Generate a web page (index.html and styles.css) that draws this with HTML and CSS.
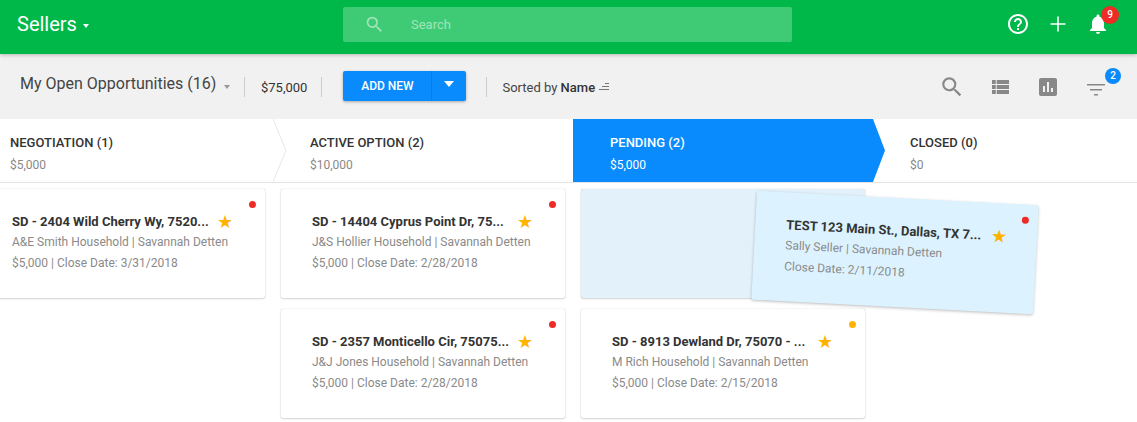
FILE: index.html
```html
<!DOCTYPE html>
<html lang="en">
<head>
    <meta charset="UTF-8">
    <title>Sellers</title>
    <link rel="stylesheet" href="styles.css">
</head>
<body>
    <header class="topbar">
        <div class="brand">Sellers <span class="caret caret-white"></span></div>
        <div class="search">
            <svg class="search-icon" viewBox="0 0 24 24" width="21" height="21"><path fill="#9fe3b8" d="M15.5 14h-.79l-.28-.27A6.47 6.47 0 0 0 16 9.5 6.5 6.5 0 1 0 9.5 16c1.61 0 3.09-.59 4.23-1.57l.27.28v.79l5 4.99L20.49 19l-4.99-5zm-6 0C7.01 14 5 11.99 5 9.5S7.01 5 9.5 5 14 7.01 14 9.5 11.99 14 9.5 14z"/></svg>
            <span class="search-text">Search</span>
        </div>
        <div class="top-icons">
            <svg viewBox="0 0 24 24" width="24" height="24"><path fill="#fff" d="M11 18h2v-2h-2v2zm1-16C6.48 2 2 6.48 2 12s4.48 10 10 10 10-4.48 10-10S17.52 2 12 2zm0 18c-4.41 0-8-3.59-8-8s3.59-8 8-8 8 3.59 8 8-3.59 8-8 8zm0-14c-2.21 0-4 1.79-4 4h2c0-1.1.9-2 2-2s2 .9 2 2c0 2-3 1.75-3 5h2c0-2.25 3-2.5 3-5 0-2.21-1.79-4-4-4z"/></svg>
            <svg viewBox="0 0 24 24" width="24" height="24"><path fill="#fff" d="M19.5 12.8h-6.7v6.7h-1.6v-6.7H4.500v-1.600h6.700V4.500h1.600v6.700h6.700z"/></svg>
            <div class="bell">
                <svg viewBox="0 0 24 24" width="24" height="24"><path fill="#fff" d="M12 22c1.100 0 2-.9 2-2h-4c0 1.100.9 2 2 2zm6-6v-5c0-3.070-1.630-5.640-4.500-6.320V4c0-.83-.67-1.500-1.500-1.500s-1.500.67-1.500 1.500v.68C7.640 5.360 6 7.920 6 11v5l-2 2v1h16v-1l-2-2z"/></svg>
                <span class="badge badge-red">9</span>
            </div>
        </div>
    </header>

    <div class="toolbar">
        <div class="view-name">My Open Opportunities (16) <span class="caret caret-grey"></span></div>
        <div class="total">$75,000</div>
        <div class="add-new">
            <span class="add-label">ADD NEW</span>
            <span class="add-arrow"><span class="caret caret-add"></span></span>
        </div>
        <div class="sorted">Sorted by <b>Name</b>
            <svg viewBox="0 0 12 9" width="12" height="9"><path fill="#777" d="M7 0h4v1H7zM4 3h7v1H4zM1 6h10v1H1z"/></svg>
        </div>
        <div class="tool-icons">
            <svg class="tool-search" viewBox="0 0 24 24" width="26" height="26"><path fill="#888" d="M15.500 14h-.79l-.28-.27A6.470 6.470 0 0 0 16 9.500 6.500 6.500 0 1 0 9.500 16c1.610 0 3.090-.59 4.230-1.570l.27.28v.79l5 4.990L20.490 19l-4.990-5zm-6 0C7.010 14 5 11.990 5 9.500S7.010 5 9.500 5 14 7.010 14 9.500 11.990 14 9.500 14z"/></svg>
            <svg viewBox="0 0 18 14" width="17" height="14" preserveAspectRatio="none"><path fill="#888" d="M0 0h4v4H0zM5 0h13v4H5zM0 5h4v4H0zM5 5h13v4H5zM0 10h4v4H0zM5 10h13v4H5z"/></svg>
            <svg viewBox="0 0 18 18" width="18" height="18"><path fill="#888" fill-rule="evenodd" d="M2 0h14a2 2 0 0 1 2 2v14a2 2 0 0 1-2 2H2a2 2 0 0 1-2-2V2a2 2 0 0 1 2-2zM4 8v6h2V8zM8 4v10h2V4zM12 10v4h2v-4z"/></svg>
            <div class="filter">
                <svg viewBox="0 0 18 12" width="18" height="12"><path fill="#888" d="M0 0h18v1.500H0zM3 5h12v1.500H3zM7 10h4v1.500H7z"/></svg>
                <span class="badge badge-blue">2</span>
            </div>
        </div>
    </div>

    <div class="stages">
        <div class="stage">
            <div class="stage-name">NEGOTIATION (1)</div>
            <div class="stage-sum">$5,000</div>
            <svg class="chevron" viewBox="0 0 14 63" width="14" height="63"><path fill="#fff" stroke="#e6e6e6" d="M0 0l13 31.500L0 63"/></svg>
        </div>
        <div class="stage">
            <div class="stage-name">ACTIVE OPTION (2)</div>
            <div class="stage-sum">$10,000</div>
        </div>
        <div class="stage stage-active">
            <div class="stage-name">PENDING (2)</div>
            <div class="stage-sum">$5,000</div>
            <svg class="chevron chevron-active" viewBox="0 0 13 63" width="13" height="63"><path fill="#0a8bfd" d="M0 0l12 31.500L0 63z"/></svg>
        </div>
        <div class="stage">
            <div class="stage-name">CLOSED (0)</div>
            <div class="stage-sum">$0</div>
        </div>
    </div>

    <div class="board">
        <div class="column">
            <div class="card">
                <span class="dot dot-red"></span>
                <div class="card-title"><span class="title-text">SD - 2404 Wild Cherry Wy, 7520...</span><span class="star">★</span></div>
                <div class="card-line">A&amp;E Smith Household | Savannah Detten</div>
                <div class="card-line">$5,000 | Close Date: 3/31/2018</div>
            </div>
        </div>
        <div class="column">
            <div class="card">
                <span class="dot dot-red"></span>
                <div class="card-title"><span class="title-text">SD - 14404 Cyprus Point Dr, 75...</span><span class="star">★</span></div>
                <div class="card-line">J&amp;S Hollier Household | Savannah Detten</div>
                <div class="card-line">$5,000 | Close Date: 2/28/2018</div>
            </div>
            <div class="card">
                <span class="dot dot-red"></span>
                <div class="card-title"><span class="title-text">SD - 2357 Monticello Cir, 75075...</span><span class="star">★</span></div>
                <div class="card-line">J&amp;J Jones Household | Savannah Detten</div>
                <div class="card-line">$5,000 | Close Date: 2/28/2018</div>
            </div>
        </div>
        <div class="column">
            <div class="card card-placeholder"></div>
            <div class="card">
                <span class="dot dot-yellow"></span>
                <div class="card-title"><span class="title-text">SD - 8913 Dewland Dr, 75070 - ...</span><span class="star">★</span></div>
                <div class="card-line">M Rich Household | Savannah Detten</div>
                <div class="card-line">$5,000 | Close Date: 2/15/2018</div>
            </div>
        </div>
        <div class="column"></div>

        <!-- card being dragged -->
        <div class="card card-drag">
            <span class="dot dot-red"></span>
            <div class="card-title"><span class="title-text">TEST 123 Main St., Dallas, TX 7...</span><span class="star">★</span></div>
            <div class="card-line">Sally Seller | Savannah Detten</div>
            <div class="card-line">Close Date: 2/11/2018</div>
        </div>
    </div>
</body>
</html>
```

FILE: styles.css
```css
* {
    box-sizing: border-box;
}
html, body {
    height: 100%;
}
body {
    margin: 0;
    font-family: Roboto, "Liberation Sans", sans-serif;
    background: #fff;
    overflow: hidden;
    color: #333;
}
.caret {
    display: inline-block;
    width: 0;
    height: 0;
    border-left: 4px solid transparent;
    border-right: 4px solid transparent;
    border-top: 4px solid #fff;
}

/* top bar */
.topbar {
    position: relative;
    z-index: 2;
    height: 54px;
    display: flex;
    align-items: center;
    background: #00b84a;
    box-shadow: 0 1px 4px rgba(0, 0, 0, 0.25);
}
.brand {
    width: 343px;
    padding-left: 17px;
    padding-bottom: 6px;
    color: #fff;
    font-size: 20px;
}
.caret-white {
    border-left-width: 3.5px;
    border-right-width: 3.5px;
    margin-left: 1px;
    vertical-align: 3px;
}
.search {
    width: 449px;
    height: 35px;
    margin-top: -5px;
    padding-left: 21px;
    display: flex;
    align-items: center;
    background: #3fcb75;
    border-radius: 2px;
}
.search-text {
    margin-left: 26px;
    font-size: 13px;
    color: #a0e5ba;
}
.top-icons {
    margin-left: auto;
    margin-right: 27px;
    margin-top: -7px;
    display: flex;
    align-items: center;
    gap: 16px;
}
.bell {
    position: relative;
    height: 24px;
}
.badge {
    position: absolute;
    display: flex;
    align-items: center;
    justify-content: center;
    border-radius: 50%;
    color: #fff;
    font-size: 10px;
    font-weight: 500;
}
.badge-red {
    top: -6px;
    left: 15px;
    width: 18px;
    height: 18px;
    background: #ee2b24;
}
.badge-blue {
    top: -13px;
    left: 18px;
    width: 16px;
    height: 16px;
    background: #0a8bfd;
}

/* toolbar */
.toolbar {
    height: 65px;
    display: flex;
    align-items: center;
    padding-left: 20px;
    background: #f1f1f1;
}
.view-name {
    width: 224px;
    height: 20px;
    margin-top: -3px;
    font-size: 16px;
    line-height: 18px;
    color: #444;
}
.caret-grey {
    border-top-color: #999;
    border-left-width: 3.500px;
    border-right-width: 3.500px;
    margin-left: 4px;
    vertical-align: 0;
}
.total {
    height: 20px;
    padding: 0 14px 0 16px;
    border-left: 1px solid #ccc;
    border-right: 1px solid #ccc;
    font-size: 13px;
    line-height: 22px;
    color: #333;
}
.add-new {
    display: flex;
    margin-left: 21px;
    margin-top: -2px;
    height: 30px;
    background: #0a8bfd;
    border-radius: 2px;
    box-shadow: 0 1px 3px rgba(0, 0, 0, 0.3);
    color: #fff;
    font-size: 12px;
    font-weight: 500;
    line-height: 30px;
}
.add-label {
    width: 88px;
    text-align: center;
}
.add-arrow {
    width: 35px;
    border-left: 1px solid #0a7be0;
    display: flex;
    align-items: center;
    justify-content: center;
}
.caret-add {
    border-left-width: 5.500px;
    border-right-width: 5.500px;
    border-top-width: 6px;
    margin-top: -4px;
}
.sorted {
    height: 20px;
    margin-left: 20px;
    padding-left: 15px;
    border-left: 1px solid #ccc;
    font-size: 13px;
    line-height: 22px;
    color: #444;
}
.sorted b {
    font-weight: 500;
    color: #333;
}
.tool-icons {
    margin-left: auto;
    margin-right: 32px;
    display: flex;
    align-items: center;
    gap: 30px;
}
.tool-search {
    margin-right: -3px;
}
.filter {
    position: relative;
    height: 12px;
}

/* stage bar */
.stages {
    height: 64px;
    margin-left: -27px;
    display: flex;
    background: #fff;
    border-bottom: 1px solid #e4e4e4;
    width: 1164px;
}
.stage {
    position: relative;
    flex: 0 0 300px;
    padding: 15px 0 0 37px;
}
.stage:last-child {
    flex: 1;
}
.stage-name {
    font-size: 13px;
    font-weight: 500;
    line-height: 18px;
    color: #333;
}
.stage-sum {
    margin-top: 6px;
    font-size: 12px;
    line-height: 15px;
    color: #888;
}
.stage-active {
    background: #0a8bfd;
}
.stage-active .stage-name, .stage-active .stage-sum {
    color: #fff;
}
.chevron {
    position: absolute;
    top: 0;
    left: 100%;
    z-index: 1;
}

/* cards */
.board {
    position: relative;
    margin-left: -27px;
    display: flex;
    width: 1164px;
}
.column {
    flex: 0 0 300px;
    padding: 6px 8px 0;
    display: flex;
    flex-direction: column;
    gap: 11px;
}
.card {
    position: relative;
    height: 109px;
    padding: 23px 0 0 31px;
    background: #fff;
    border-radius: 2px;
    box-shadow: 0 0 1px rgba(0, 0, 0, 0.3), 0 1px 2px rgba(0, 0, 0, 0.15);
}
.card-title {
    display: flex;
    align-items: center;
    height: 18px;
    font-size: 13px;
    font-weight: 700;
    color: #333;
}
.title-text {
    width: 205px;
    white-space: nowrap;
}
.star {
    margin-top: 1px;
    font-size: 18px;
    line-height: 18px;
    color: #ffb300;
    font-family: "DejaVu Sans", sans-serif;
}
.card-line {
    margin-top: 4px;
    font-size: 12px;
    line-height: 17px;
    color: #8a8a8a;
}
.dot {
    position: absolute;
    top: 12px;
    right: 9px;
    width: 7px;
    height: 7px;
    border-radius: 50%;
}
.dot-red {
    background: #ee2b24;
}
.dot-yellow {
    background: #ffb300;
}
.card-placeholder {
    background: #e3f1fa;
}
.card-drag {
    position: absolute;
    top: 15px;
    left: 781px;
    width: 282px;
    background: #dcf3ff;
    transform: rotate(3deg);
    box-shadow: 0 1px 3px rgba(0, 0, 0, 0.25);
}
```
